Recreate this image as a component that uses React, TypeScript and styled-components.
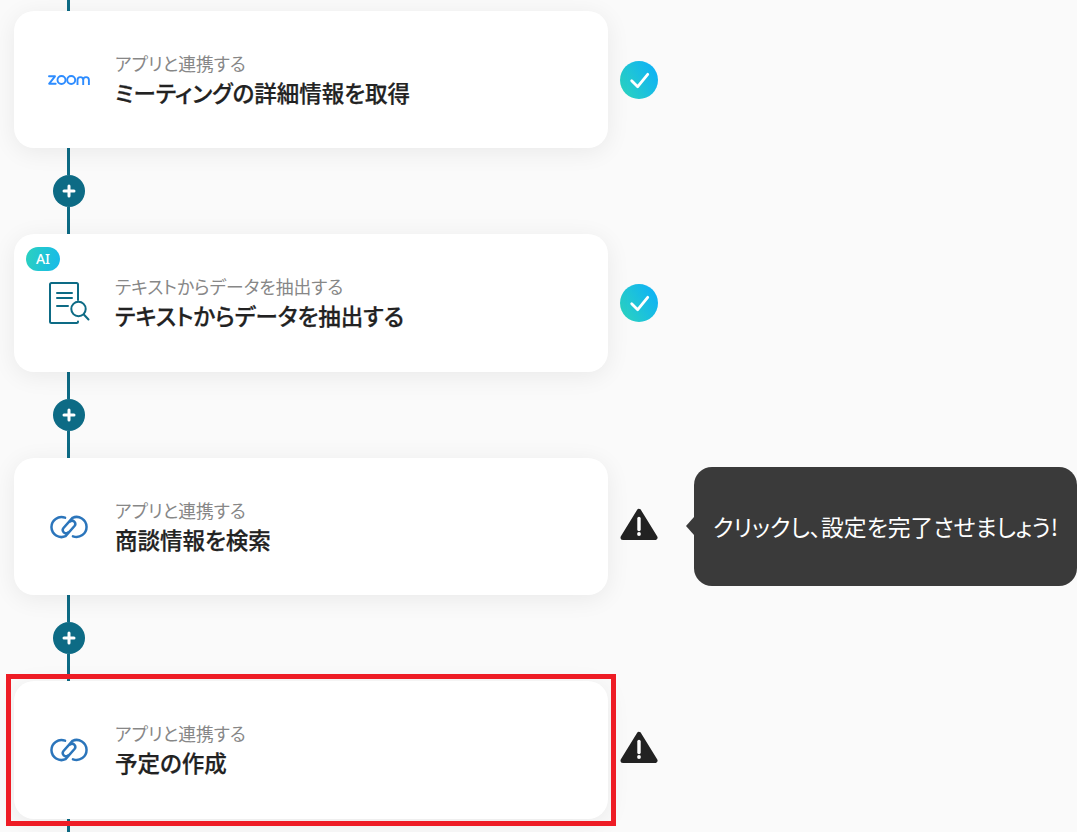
import styled, { createGlobalStyle } from "styled-components"

const GlobalStyle = createGlobalStyle`
  html, body {
    margin: 0;
    padding: 0;
    background: #fafafa;
  }
  body {
    font-family: "Noto Sans CJK JP", "Noto Sans", sans-serif;
    font-feature-settings: "palt";
  }
`

const Page = styled.div`
  width: 1077px;
  height: 832px;
  overflow: hidden;
  padding-left: 14px;
  box-sizing: border-box;
`

const Connector = styled.div<{ $height: number }>`
  display: flex;
  flex-direction: column;
  align-items: center;
  width: 32px;
  height: ${(p) => p.$height}px;
  margin-left: 39px;
`

const Line = styled.div`
  flex: 1;
  width: 3px;
  margin-right: 1px;
  background: #0d6b85;
`

const AddButton = styled.div`
  flex: none;
  width: 32px;
  height: 32px;
  border-radius: 50%;
  background: #0d6b85;
  display: flex;
  align-items: center;
  justify-content: center;
`

const Step = styled.div`
  position: relative;
  display: flex;
  align-items: center;
  gap: 12px;
`

const Card = styled.div`
  position: relative;
  flex: none;
  width: 594px;
  height: 137.5px;
  box-sizing: border-box;
  padding-left: 24px;
  display: flex;
  align-items: center;
  gap: 15px;
  background: #fff;
  border-radius: 20px;
  box-shadow: 0 4px 24px rgba(0, 0, 0, 0.07);
`

const IconSlot = styled.div`
  flex: none;
  width: 62px;
  display: flex;
  align-items: center;
  justify-content: center;
`

const Texts = styled.div`
  display: flex;
  flex-direction: column;
`

const SubText = styled.div`
  font-size: 17.8px;
  line-height: 24px;
  color: #878787;
`

const Title = styled.div`
  font-size: 22.5px;
  line-height: 34px;
  font-weight: 500;
  -webkit-text-stroke: 0.25px #222;
  color: #222;
`

const AiBadge = styled.div`
  position: absolute;
  top: 13px;
  left: 12px;
  width: 34px;
  height: 24px;
  border-radius: 12px;
  background: linear-gradient(100deg, #2bd1bf, #17b9ea);
  color: #fff;
  font-family: "Noto Sans", sans-serif;
  font-size: 14px;
  font-weight: 500;
  line-height: 24px;
  text-align: center;
`

const Selected = styled.div`
  position: absolute;
  top: -7px;
  left: -8px;
  right: -8px;
  bottom: -7px;
  border: 5.5px solid #ee1c25;
  pointer-events: none;
`

const Tooltip = styled.div`
  position: absolute;
  left: 680px;
  top: 9px;
  width: 383px;
  height: 119px;
  box-sizing: border-box;
  border-radius: 18px;
  background: #3a3a3a;
  color: #fff;
  font-size: 22.8px;
  display: flex;
  align-items: center;
  justify-content: center;
  white-space: nowrap;
  &::before {
    content: "";
    position: absolute;
    left: -8px;
    top: 50%;
    width: 0;
    height: 0;
    margin-top: -9px;
    border-style: solid;
    border-width: 9px 8px 9px 0;
    border-color: transparent #3a3a3a transparent transparent;
  }
`

function PlusIcon() {
  return (
    <svg width="14" height="14" viewBox="0 0 14 14">
      <path d="M7 2v10M2 7h10" stroke="#fff" strokeWidth="3" strokeLinecap="round" />
    </svg>
  )
}

function ZoomLogo() {
  return (
    <svg width="42" height="12" viewBox="0 0 42 12" fill="none" stroke="#2d8cff" strokeWidth="1.9">
      <path d="M1 2.300h6L1.200 9.700h6.500" strokeLinejoin="round" strokeLinecap="round" />
      <circle cx="13.500" cy="6" r="4" />
      <circle cx="23.200" cy="6" r="4" />
      <path d="M29.500 10.900V6a2.850 2.850 0 0 1 5.700 0v4.900M35.200 6a2.850 2.850 0 0 1 5.700 0v4.900" />
    </svg>
  )
}

function LinkLogo() {
  return (
    <svg width="38" height="24" viewBox="0 0 38 24" fill="none" stroke="#2b75bb" strokeWidth="2.500" strokeLinecap="round">
      <path d="M15 2.700A10 10 0 1 0 15.500 21.200L24.500 11A3.200 3.200 0 0 0 20 6.500" />
      <path d="M23 21.300A10 10 0 1 0 22.500 2.800L13.500 13A3.200 3.200 0 0 0 18 17.500" />
    </svg>
  )
}

function ExtractIcon() {
  return (
    <svg width="42" height="44" viewBox="0 0 42 44" fill="none" stroke="#0d6b85" strokeWidth="2" strokeLinecap="round" strokeLinejoin="round">
      <path d="M30 40.500A1.500 1.500 0 0 1 28.500 42H3.500A1.500 1.500 0 0 1 2 40.500V3.500A1.500 1.500 0 0 1 3.500 2h25A1.500 1.500 0 0 1 30 3.500V19" />
      <path d="M9 12h15M9 17h15M9 25h11" />
      <circle cx="30.500" cy="28" r="7.200" />
      <path d="M35.800 33.500 40.500 38.500" />
    </svg>
  )
}

function CheckBadge() {
  return (
    <svg width="38" height="38" viewBox="0 0 38 38">
      <defs>
        <linearGradient id="check-grad" x1="0" y1="0.9" x2="1" y2="0.3">
          <stop offset="0" stopColor="#2cd4bd" />
          <stop offset="1" stopColor="#0fb2f5" />
        </linearGradient>
      </defs>
      <circle cx="19" cy="19" r="19" fill="url(#check-grad)" />
      <path d="M11.700 19.700 17.700 25.700 27.700 13.300" fill="none" stroke="#fff" strokeWidth="2.800" strokeLinecap="round" strokeLinejoin="round" />
    </svg>
  )
}

function WarningBadge() {
  return (
    <svg width="38" height="38" viewBox="0 0 38 38">
      <path d="M19 3.500 35 29.500H3Z" fill="#222" stroke="#222" strokeWidth="5" strokeLinejoin="round" />
      <path d="M19 10.500v11" stroke="#fff" strokeWidth="3.400" strokeLinecap="round" />
      <circle cx="19" cy="26" r="1.900" fill="#fff" />
    </svg>
  )
}

type StepData = {
  sub: string
  title: string
  icon: JSX.Element
  status: "done" | "warning"
  ai?: boolean
  hint?: string
  selected?: boolean
}

const steps: StepData[] = [
  { sub: "アプリと連携する", title: "ミーティングの詳細情報を取得", icon: <ZoomLogo />, status: "done" },
  { sub: "テキストからデータを抽出する", title: "テキストからデータを抽出する", icon: <ExtractIcon />, status: "done", ai: true },
  { sub: "アプリと連携する", title: "商談情報を検索", icon: <LinkLogo />, status: "warning", hint: "クリックし、設定を完了させましょう!" },
  { sub: "アプリと連携する", title: "予定の作成", icon: <LinkLogo />, status: "warning", selected: true },
]

export default function App() {
  return (
    <Page>
      <GlobalStyle />
      <Connector $height={10.75}>
        <Line />
      </Connector>
      {steps.map((step, i) => (
        <div key={i}>
          <Step>
            <Card>
              {step.ai && <AiBadge>AI</AiBadge>}
              <IconSlot>{step.icon}</IconSlot>
              <Texts>
                <SubText>{step.sub}</SubText>
                <Title>{step.title}</Title>
              </Texts>
              {step.selected && <Selected />}
            </Card>
            {step.status === "done" ? <CheckBadge /> : <WarningBadge />}
            {step.hint && <Tooltip>{step.hint}</Tooltip>}
          </Step>
          {i < steps.length - 1 ? (
            <Connector $height={86}>
              <Line />
              <AddButton>
                <PlusIcon />
              </AddButton>
              <Line />
            </Connector>
          ) : (
            <Connector $height={14}>
              <Line />
            </Connector>
          )}
        </div>
      ))}
    </Page>
  )
}
